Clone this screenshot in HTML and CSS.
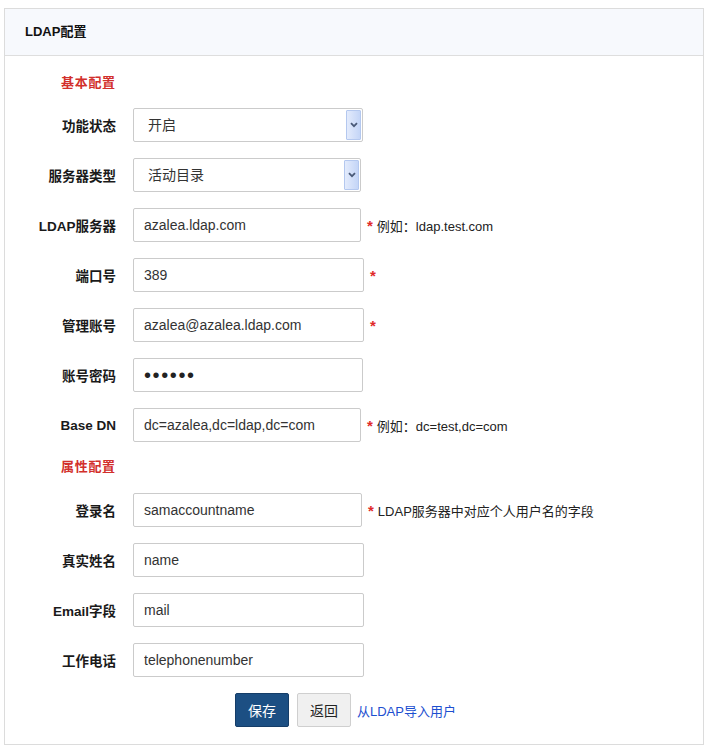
FILE: index.html
```html
<!DOCTYPE html>
<html lang="zh-CN">
<head>
<meta charset="utf-8">
<title>LDAP配置</title>
<link rel="stylesheet" href="styles.css">
</head>
<body>
<div class="panel">
  <div class="panel-head">LDAP配置</div>
  <form class="panel-body">
    <div class="section-title">基本配置</div>

    <div class="row">
      <label class="lbl">功能状态</label>
      <div class="select-wrap w230">
        <select class="select"><option>开启</option><option>关闭</option></select>
        <span class="arrow"><svg width="8" height="6" viewBox="0 0 8 6"><path d="M1 1.2 L4 4.2 L7 1.2" fill="none" stroke="#4a5a78" stroke-width="1.8"/></svg></span>
      </div>
    </div>

    <div class="row">
      <label class="lbl">服务器类型</label>
      <div class="select-wrap w228">
        <select class="select"><option>活动目录</option></select>
        <span class="arrow"><svg width="8" height="6" viewBox="0 0 8 6"><path d="M1 1.2 L4 4.2 L7 1.2" fill="none" stroke="#4a5a78" stroke-width="1.8"/></svg></span>
      </div>
    </div>

    <div class="row">
      <label class="lbl">LDAP服务器</label>
      <input class="input w228" type="text" value="azalea.ldap.com">
      <span class="req">*</span><span class="hint">例如：ldap.test.com</span>
    </div>

    <div class="row">
      <label class="lbl">端口号</label>
      <input class="input w231" type="text" value="389">
      <span class="req solo">*</span>
    </div>

    <div class="row">
      <label class="lbl">管理账号</label>
      <input class="input w231" type="text" value="azalea@azalea.ldap.com">
      <span class="req solo">*</span>
    </div>

    <div class="row">
      <label class="lbl">账号密码</label>
      <input class="input pwd w230" type="password" value="123456">
    </div>

    <div class="row">
      <label class="lbl">Base DN</label>
      <input class="input w228" type="text" value="dc=azalea,dc=ldap,dc=com">
      <span class="req">*</span><span class="hint">例如：dc=test,dc=com</span>
    </div>

    <div class="section-title second">属性配置</div>

    <div class="row">
      <label class="lbl">登录名</label>
      <input class="input w229" type="text" value="samaccountname">
      <span class="req">*</span><span class="hint">LDAP服务器中对应个人用户名的字段</span>
    </div>

    <div class="row">
      <label class="lbl">真实姓名</label>
      <input class="input w231" type="text" value="name">
    </div>

    <div class="row">
      <label class="lbl">Email字段</label>
      <input class="input w231" type="text" value="mail">
    </div>

    <div class="row">
      <label class="lbl">工作电话</label>
      <input class="input w231" type="text" value="telephonenumber">
    </div>

    <div class="actions">
      <button class="btn btn-primary" type="button">保存</button>
      <button class="btn btn-default" type="button">返回</button>
      <a class="link" href="#">从LDAP导入用户</a>
    </div>
  </form>
</div>
</body>
</html>
```
FILE: styles.css
```css
html, body {
  margin: 0;
  padding: 0;
  background: #ffffff;
}
body {
  font-family: "Liberation Sans", "Noto Sans CJK SC", sans-serif;
  color: #333;
}
.panel {
  margin: 8px 5px 0 4px;
  border: 1px solid #dcdcdc;
  background: #fff;
}
.panel-head {
  height: 46px;
  line-height: 46px;
  padding-left: 20px;
  background: #f7f9fd;
  border-bottom: 1px solid #dedede;
  font-size: 13px;
  font-weight: bold;
  color: #111;
}
.panel-body {
  display: flex;
  flex-direction: column;
  gap: 16px;
  padding: 18px 0 17px 0;
  margin: 0;
}
.section-title {
  height: 18px;
  line-height: 18px;
  padding-left: 56px;
  font-size: 13px;
  font-weight: bold;
  color: #d2302c;
  letter-spacing: 0.7px;
}
.section-title.second {
  margin-bottom: 1px;
}
.row {
  display: flex;
  align-items: center;
  height: 34px;
}
.lbl {
  width: 111px;
  margin-right: 17px;
  text-align: right;
  font-size: 13.5px;
  font-weight: bold;
  color: #1a1a1a;
  white-space: nowrap;
}
.input {
  box-sizing: border-box;
  height: 34px;
  border: 1px solid #cbcbcb;
  border-radius: 2px;
  padding: 0 10px;
  font-family: "Liberation Sans", "Noto Sans CJK SC", sans-serif;
  font-size: 14px;
  color: #333;
  background: #fff;
  outline: none;
}
.pwd {
  font-size: 20px;
  letter-spacing: 1.6px;
  color: #222;
  padding-left: 10px;
}
.w228 { width: 228px; }
.w229 { width: 229px; }
.w230 { width: 230px; }
.w231 { width: 231px; }
.select-wrap {
  position: relative;
  height: 34px;
}
.select {
  box-sizing: border-box;
  width: 100%;
  height: 34px;
  border: 1px solid #cbcbcb;
  border-radius: 2px;
  padding: 0 14px;
  font-family: "Liberation Sans", "Noto Sans CJK SC", sans-serif;
  font-size: 14px;
  color: #333;
  background: #fff;
  -webkit-appearance: none;
  appearance: none;
  outline: none;
}
.arrow {
  position: absolute;
  right: 2px;
  top: 2px;
  bottom: 2px;
  width: 15px;
  box-sizing: border-box;
  border: 1px solid #b4c8ef;
  border-radius: 1px;
  background: linear-gradient(to right, #e3ebfc, #c4d5f7);
  display: flex;
  align-items: center;
  justify-content: center;
  pointer-events: none;
}
.req {
  margin-left: 6px;
  color: #e02a2a;
  font-size: 15px;
  font-weight: bold;
  line-height: 14px;
  position: relative;
  top: 1px;
}
.hint {
  margin-left: 4px;
  font-size: 13px;
  color: #222;
}
.actions {
  display: flex;
  align-items: center;
  height: 34px;
  padding-left: 230px;
}
.btn {
  box-sizing: border-box;
  height: 34px;
  width: 54px;
  border-radius: 2px;
  font-family: "Liberation Sans", "Noto Sans CJK SC", sans-serif;
  font-size: 14px;
  padding: 0;
  cursor: pointer;
}
.btn-primary {
  background: #1c4f83;
  border: 1px solid #153d68;
  color: #fff;
}
.btn-default {
  margin-left: 8px;
  background: #f0f0f0;
  border: 1px solid #cfcfcf;
  color: #222;
}
.link {
  margin-left: 6px;
  font-size: 13px;
  color: #1d4fd0;
  text-decoration: none;
}
```
